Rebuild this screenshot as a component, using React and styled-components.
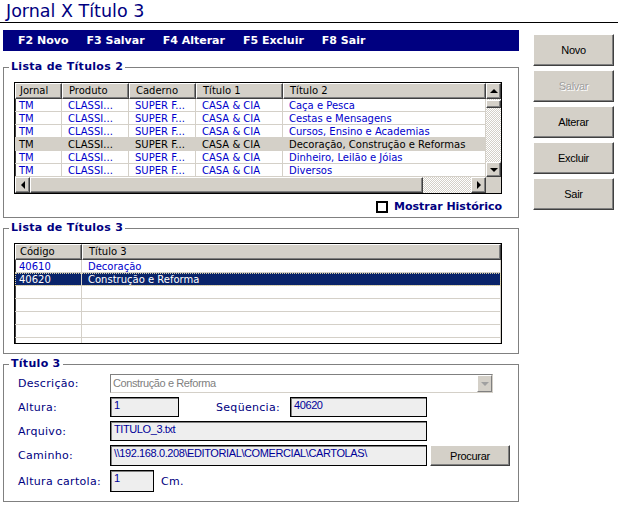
import styled, { createGlobalStyle, css } from 'styled-components'

const NAVY = '#000080'
const FACE = '#d4d0c8'
const CELL_BLUE = '#0000cc'

const GlobalStyle = createGlobalStyle`
  body {
    margin: 0;
    background: #fff;
    font-family: "DejaVu Sans", Verdana, sans-serif;
  }
`

const Page = styled.div`
  width: 618px;
  height: 505px;
  overflow: hidden;
`

const Title = styled.h1`
  margin: 0;
  height: 21px;
  padding: 1px 6px 0;
  line-height: 21px;
  font-size: 17.5px;
  font-weight: normal;
  color: ${NAVY};
  border-bottom: 1px solid #000;
`

const Main = styled.div`
  display: flex;
  align-items: flex-start;
  margin-top: 7px;
`

const LeftColumn = styled.div`
  width: 516px;
  margin-left: 3px;
`

const Toolbar = styled.div`
  height: 21px;
  background: ${NAVY};
  display: flex;
  align-items: center;
  gap: 18px;
  padding-left: 15px;
  color: #fff;
  font-size: 11px;
  font-weight: bold;
`

const Group = styled.fieldset`
  margin: ${(p) => p.$top}px 0 0;
  padding: 0;
  border: 1px solid #808080;
  min-width: 0;
`

const Legend = styled.legend`
  margin-left: 5px;
  padding: 0 2px;
  line-height: 14px;
  font-size: 11px;
  font-weight: bold;
  letter-spacing: 0.3px;
  color: ${NAVY};
`

const GroupBody = styled.div`
  padding: ${(p) => p.$pad};
`

/* ---------- grid ---------- */

const Grid = styled.div`
  width: 488px;
  height: ${(p) => p.$h}px;
  box-sizing: border-box;
  border: 1px solid #000;
  box-shadow: inset 1px 1px 0 #404040;
  background: #fff;
  display: flex;
  flex-direction: column;
  overflow: hidden;
  font-size: 10px;
`

const GridTop = styled.div`
  display: flex;
  flex: 1;
  min-height: 0;
`

const Table = styled.div`
  flex: 1;
  min-width: 0;
  overflow: hidden;
`

const HeaderRow = styled.div`
  display: grid;
  grid-template-columns: ${(p) => p.$cols};
  height: 16px;
`

const HeaderCell = styled.div`
  box-sizing: border-box;
  background: ${FACE};
  border-top: 1px solid #fff;
  border-left: 1px solid #fff;
  border-right: 1px solid #404040;
  border-bottom: 1px solid #404040;
  box-shadow: inset -1px -1px 0 #808080;
  padding-left: 4px;
  line-height: 14px;
  color: #000;
  white-space: nowrap;
  overflow: hidden;

  &:not(:first-child) {
    padding-left: 6px;
  }
`

const rowVariants = {
  plain: css`
    color: ${CELL_BLUE};
  `,
  hilite: css`
    background: ${FACE};
    color: #000;
  `,
  focus: css`
    background: #0a246a;
    color: #fff;
    outline: 1px dotted #d8d0a0;
    outline-offset: -1px;
  `,
}

const Row = styled.div`
  display: grid;
  grid-template-columns: ${(p) => p.$cols};
  height: 13px;
  ${(p) => rowVariants[p.$variant || 'plain']}
`

const Cell = styled.div`
  box-sizing: border-box;
  border-right: 1px solid ${FACE};
  border-bottom: 1px solid ${FACE};
  padding-left: 4px;
  line-height: 13px;
  white-space: nowrap;
  overflow: hidden;

  &:not(:first-child) {
    padding-left: 6px;
  }
`

const ScrollBtn = styled.div`
  flex: none;
  width: 15px;
  height: ${(p) => p.$h || 15}px;
  box-sizing: border-box;
  background: ${FACE};
  border-top: 1px solid #fff;
  border-left: 1px solid #fff;
  border-right: 1px solid #404040;
  border-bottom: 1px solid #404040;
  box-shadow: inset -1px -1px 0 #808080;
  display: flex;
  align-items: center;
  justify-content: center;

  &::after {
    content: '';
    width: 0;
    height: 0;
    ${(p) =>
      p.$dir === 'up' &&
      css`
        border-left: 4px solid transparent;
        border-right: 4px solid transparent;
        border-bottom: 4px solid #000;
      `}
    ${(p) =>
      p.$dir === 'down' &&
      css`
        border-left: 4px solid transparent;
        border-right: 4px solid transparent;
        border-top: 4px solid #000;
      `}
    ${(p) =>
      p.$dir === 'left' &&
      css`
        border-top: 4px solid transparent;
        border-bottom: 4px solid transparent;
        border-right: 4px solid #000;
      `}
    ${(p) =>
      p.$dir === 'right' &&
      css`
        border-top: 4px solid transparent;
        border-bottom: 4px solid transparent;
        border-left: 4px solid #000;
      `}
  }
`

const Thumb = styled.div`
  flex: none;
  width: ${(p) => p.$w}px;
  height: ${(p) => p.$h}px;
  box-sizing: border-box;
  background: ${FACE};
  border-top: 1px solid #fff;
  border-left: 1px solid #fff;
  border-right: 1px solid #404040;
  border-bottom: 1px solid #404040;
  box-shadow: inset -1px -1px 0 #808080;
`

const Track = styled.div`
  flex: ${(p) => (p.$h ? 'none' : 1)};
  height: ${(p) => (p.$h ? `${p.$h}px` : 'auto')};
  background-image: repeating-conic-gradient(${FACE} 0 25%, #fff 0 50%);
  background-size: 2px 2px;
`

const VScroll = styled.div`
  width: 15px;
  display: flex;
  flex-direction: column;
`

const HScroll = styled.div`
  height: 16px;
  display: flex;
  flex: none;
`

const Corner = styled.div`
  width: 15px;
  background: ${FACE};
`

const CheckRow = styled.label`
  width: 488px;
  margin-top: 6px;
  height: 13px;
  display: flex;
  align-items: center;
  justify-content: flex-end;
  gap: 6px;
  font-size: 11px;
  font-weight: bold;
  color: ${NAVY};
`

const CheckBox = styled.span`
  width: 12px;
  height: 12px;
  box-sizing: border-box;
  border: 2px solid #000;
  background: #fff;
`

/* ---------- form ---------- */

const Fields = styled.div`
  display: flex;
  flex-direction: column;
  gap: 4px;
`

const FieldRow = styled.div`
  display: flex;
  align-items: center;
  height: ${(p) => p.$h || 20}px;
`

const Label = styled.span`
  flex: none;
  width: ${(p) => p.$w}px;
  margin-left: ${(p) => p.$ml || 0}px;
  font-size: 11px;
  letter-spacing: 0.3px;
  color: ${NAVY};
  white-space: nowrap;
`

const TextBox = styled.div`
  flex: none;
  width: ${(p) => p.$w}px;
  height: 100%;
  box-sizing: border-box;
  border: 1px solid #000;
  box-shadow: inset 1px 1px 0 #808080;
  background: #eeeeee;
  color: #000099;
  font-family: "Liberation Sans", Arial, sans-serif;
  font-size: 11px;
  letter-spacing: -0.4px;
  line-height: 13px;
  padding: 1px 3px;
  white-space: nowrap;
  overflow: hidden;
`

const Combo = styled.div`
  flex: none;
  width: 383px;
  height: 19px;
  box-sizing: border-box;
  border-top: 1px solid #808080;
  border-left: 1px solid #808080;
  border-right: 1px solid ${FACE};
  border-bottom: 1px solid ${FACE};
  background: #fff;
  display: flex;
  align-items: stretch;
  color: #808080;
  font-family: "Liberation Sans", Arial, sans-serif;
  font-size: 11px;
  letter-spacing: -0.4px;
`

const ComboText = styled.span`
  flex: 1;
  padding: 2px 2px 0;
  line-height: 13px;
`

const ComboBtn = styled.span`
  width: 15px;
  box-sizing: border-box;
  background: ${FACE};
  border: 1px solid;
  border-color: #fff #808080 #808080 #fff;
  display: flex;
  align-items: center;
  justify-content: center;

  &::after {
    content: '';
    border-left: 4px solid transparent;
    border-right: 4px solid transparent;
    border-top: 4px solid #a0a0a0;
  }
`

const Unit = styled.span`
  margin-left: 7px;
  font-size: 11px;
  letter-spacing: 0.3px;
  color: ${NAVY};
`

/* ---------- buttons ---------- */

const RightColumn = styled.div`
  margin: 4px 0 0 14px;
  display: flex;
  flex-direction: column;
  gap: 4px;
`

const Button = styled.button`
  width: ${(p) => p.$w || 81}px;
  height: ${(p) => p.$h || 32}px;
  margin-left: ${(p) => p.$ml || 0}px;
  flex: none;
  padding: 0;
  box-sizing: border-box;
  background: ${FACE};
  border: 1px solid;
  border-color: #fff #404040 #404040 #fff;
  box-shadow: inset -1px -1px 0 #808080;
  font-family: "Liberation Sans", Arial, sans-serif;
  font-size: 11px;
  letter-spacing: -0.3px;
  color: #000;

  &:disabled {
    color: #a0a0a0;
    text-shadow: 1px 1px 0 #fff;
  }
`

/* ---------- data ---------- */

const titulos2 = [
  'Caça e Pesca',
  'Cestas e Mensagens',
  'Cursos, Ensino e Academias',
  'Decoração, Construção e Reformas',
  'Dinheiro, Leilão e Jóias',
  'Diversos',
]

const cols2 = '47px 67px 67px 87px 1fr'
const cols3 = '67px 1fr'

const titulos3 = [
  { codigo: '40610', titulo: 'Decoração' },
  { codigo: '40620', titulo: 'Construção e Reforma', selected: true },
  { codigo: '', titulo: '' },
  { codigo: '', titulo: '' },
  { codigo: '', titulo: '' },
  { codigo: '', titulo: '' },
  { codigo: '', titulo: '' },
]

const App = () => {
  return (
    <Page>
      <GlobalStyle />
      <Title>Jornal X Título 3</Title>
      <Main>
        <LeftColumn>
          <Toolbar>
            <span>F2 Novo</span>
            <span>F3 Salvar</span>
            <span>F4 Alterar</span>
            <span>F5 Excluir</span>
            <span>F8 Sair</span>
          </Toolbar>

          <Group $top={9}>
            <Legend>Lista de Títulos 2</Legend>
            <GroupBody $pad="8px 10px 4px">
              <Grid $h={112}>
                <GridTop>
                  <Table>
                    <HeaderRow $cols={cols2}>
                      <HeaderCell>Jornal</HeaderCell>
                      <HeaderCell>Produto</HeaderCell>
                      <HeaderCell>Caderno</HeaderCell>
                      <HeaderCell>Título 1</HeaderCell>
                      <HeaderCell>Título 2</HeaderCell>
                    </HeaderRow>
                    {titulos2.map((t, i) => (
                      <Row key={t} $cols={cols2} $variant={i === 3 ? 'hilite' : 'plain'}>
                        <Cell>TM</Cell>
                        <Cell>CLASSI...</Cell>
                        <Cell>SUPER F...</Cell>
                        <Cell>CASA &amp; CIA</Cell>
                        <Cell>{t}</Cell>
                      </Row>
                    ))}
                  </Table>
                  <VScroll>
                    <ScrollBtn $dir="up" $h={16} />
                    <Track $h={1} />
                    <Thumb $w={15} $h={8} />
                    <Track />
                    <ScrollBtn $dir="down" />
                  </VScroll>
                </GridTop>
                <HScroll>
                  <ScrollBtn $dir="left" $h={16} />
                  <Thumb $w={393} $h={16} />
                  <Track />
                  <ScrollBtn $dir="right" $h={16} />
                  <Corner />
                </HScroll>
              </Grid>
              <CheckRow>
                <CheckBox />
                Mostrar Histórico
              </CheckRow>
            </GroupBody>
          </Group>

          <Group $top={3}>
            <Legend>Lista de Títulos 3</Legend>
            <GroupBody $pad="8px 10px 9px">
              <Grid $h={101}>
                <Table>
                  <HeaderRow $cols={cols3}>
                    <HeaderCell>Código</HeaderCell>
                    <HeaderCell>Título 3</HeaderCell>
                  </HeaderRow>
                  {titulos3.map((r, i) => (
                    <Row key={i} $cols={cols3} $variant={r.selected ? 'focus' : 'plain'}>
                      <Cell>{r.codigo}</Cell>
                      <Cell>{r.titulo}</Cell>
                    </Row>
                  ))}
                </Table>
              </Grid>
            </GroupBody>
          </Group>

          <Group $top={3}>
            <Legend>Título 3</Legend>
            <GroupBody $pad="3px 0 9px 14px">
              <Fields>
                <FieldRow $h={19}>
                  <Label $w={92}>Descrição:</Label>
                  <Combo>
                    <ComboText>Construção e Reforma</ComboText>
                    <ComboBtn />
                  </Combo>
                </FieldRow>
                <FieldRow>
                  <Label $w={92}>Altura:</Label>
                  <TextBox $w={69}>1</TextBox>
                  <Label $w={74} $ml={37}>Seqüencia:</Label>
                  <TextBox $w={137}>40620</TextBox>
                </FieldRow>
                <FieldRow>
                  <Label $w={92}>Arquivo:</Label>
                  <TextBox $w={317}>TITULO_3.txt</TextBox>
                </FieldRow>
                <FieldRow $h={21}>
                  <Label $w={92}>Caminho:</Label>
                  <TextBox $w={317}>\\192.168.0.208\EDITORIAL\COMERCIAL\CARTOLAS\</TextBox>
                  <Button $w={80} $h={21} $ml={3}>Procurar</Button>
                </FieldRow>
                <FieldRow $h={22}>
                  <Label $w={92}>Altura cartola:</Label>
                  <TextBox $w={44}>1</TextBox>
                  <Unit>Cm.</Unit>
                </FieldRow>
              </Fields>
            </GroupBody>
          </Group>
        </LeftColumn>

        <RightColumn>
          <Button>Novo</Button>
          <Button disabled>Salvar</Button>
          <Button>Alterar</Button>
          <Button>Excluir</Button>
          <Button>Sair</Button>
        </RightColumn>
      </Main>
    </Page>
  )
}

export default App
